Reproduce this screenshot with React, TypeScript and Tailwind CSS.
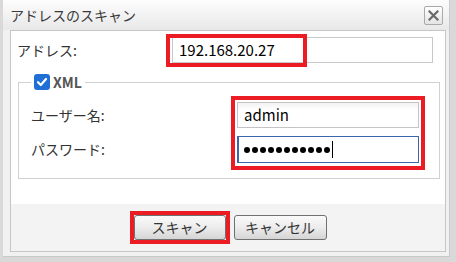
import React from "react"

const font = { fontFamily: '"Noto Sans CJK JP", "Noto Sans", "Liberation Sans", sans-serif' }

function CloseButton() {
    return (
        <button className="flex h-[19px] w-[19px] items-center justify-center rounded-[2px] border border-[#a9a9a9] bg-gradient-to-b from-[#ffffff] to-[#e4e4e4]">
            <svg width="11" height="11" viewBox="0 0 11 11">
                <path d="M1.5 1.5 L9.5 9.5 M9.5 1.5 L1.5 9.5" stroke="#6b6b6b" strokeWidth="2.2" strokeLinecap="square" />
            </svg>
        </button>
    )
}

function Button({ label, width }: { label: string; width: string }) {
    return (
        <button
            className={`flex h-[25px] ${width} items-center justify-center rounded-[3px] border border-[#707070] bg-gradient-to-b from-[#fafafa] via-[#ececec] to-[#d5d5d5] text-[14px] text-[#333]`}
        >
            {label}
        </button>
    )
}

const dots = Array.from({ length: 11 })

export default function App() {
    return (
        <div className="relative h-[262px] w-[456px] overflow-hidden bg-[#d9d9d9]" style={font}>
            <div className="ml-[3px] h-[257px] w-[447px] bg-[#f1f1f1] border-r border-b border-[#c9c9c9]">
                {/* title bar */}
                <div className="flex h-[30px] items-center justify-between bg-gradient-to-b from-[#fdfdfd] to-[#e8e8e8] pl-[7px] pr-[6px]">
                    <span className="text-[14px] text-[#3a3a3a]">アドレスのスキャン</span>
                    <CloseButton />
                </div>

                {/* content */}
                <div className="ml-[7px] flex h-[222px] w-[436px] flex-col border border-[#c6c6c6]">
                    <div className="relative h-[173px] bg-white">
                        <div className="flex items-center pt-[6px]">
                            <span className="w-[161px] pl-[6px] text-[14px] text-[#333]">アドレス:</span>
                            <div className="flex h-[26px] w-[261px] items-center border border-[#c8c8c8] bg-white pl-[6px] text-[15px] text-black">
                                192.168.20.27
                            </div>
                        </div>
                        <div className="absolute left-[155px] top-[3px] h-[33px] w-[141px] border-[4px] border-[#ec1c24]" />

                        <fieldset className="ml-[7px] mt-[11px] h-[105px] w-[422px] border border-[#d0d0d0]">
                            <legend className="ml-[12px] flex items-center gap-[3px] px-[3px]">
                                <span className="flex h-[16px] w-[16px] items-center justify-center rounded-[3px] bg-[#1f6fd6]">
                                    <svg width="12" height="12" viewBox="0 0 12 12">
                                        <path d="M2 6.2 L4.8 9 L10 3" fill="none" stroke="white" strokeWidth="2.2" strokeLinecap="round" strokeLinejoin="round" />
                                    </svg>
                                </span>
                                <span className="text-[14px] font-bold leading-[16px] text-[#555]">XML</span>
                            </legend>
                            <div className="flex items-start pt-[6px]">
                                <div className="flex w-[212px] flex-col pl-[12px] pt-[6px] text-[14px] text-[#333]">
                                    <span className="leading-[26px]">ユーザー名:</span>
                                    <span className="mt-[8px] leading-[27px]">パスワード:</span>
                                </div>
                                <div className="flex h-[74px] w-[194px] flex-col gap-[8px] border-[4px] border-[#ec1c24] p-[2px]">
                                    <div className="flex h-[26px] items-center border border-[#c4c4c4] bg-gradient-to-b from-[#f2f2f2] to-white to-[30%] pl-[6px] text-[15px] text-black">
                                        admin
                                    </div>
                                    <div className="flex h-[27px] items-center border border-[#3b66a8] border-l-2 pl-[5px]">
                                        <div className="flex gap-[2px]">
                                            {dots.map((_, i) => (
                                                <span key={i} className="h-[6px] w-[6px] rounded-full bg-black" />
                                            ))}
                                        </div>
                                        <span className="ml-[2px] h-[17px] w-[1px] bg-black" />
                                    </div>
                                </div>
                            </div>
                        </fieldset>
                    </div>

                    {/* footer */}
                    <div className="flex flex-1 items-center justify-center gap-[4px] bg-[#f3f3f3]">
                        <div className="border-[4px] border-[#ec1c24]">
                            <Button label="スキャン" width="w-[92px]" />
                        </div>
                        <Button label="キャンセル" width="w-[93px]" />
                    </div>
                </div>
            </div>
        </div>
    )
}
